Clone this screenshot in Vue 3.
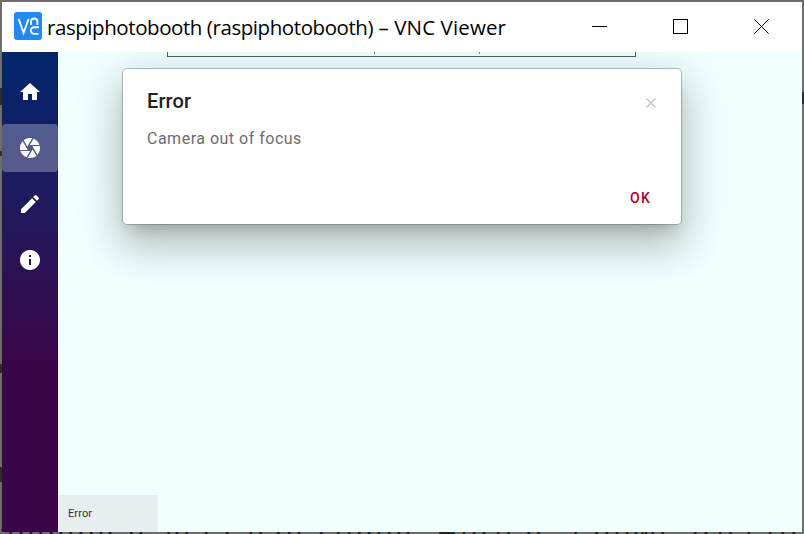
<script setup>
const items = [
  { name: 'home', d: 'M10 20v-6h4v6h5v-8h3L12 3 2 12h3v8z' },
  { name: 'camera', active: true, d: 'M9.4 10.5l4.77-8.26C13.47 2.09 12.75 2 12 2c-2.4 0-4.6.85-6.32 2.25l3.66 6.35.06-.1zM21.54 9c-.92-2.92-3.15-5.26-6-6.34L11.88 9h9.66zm.26 1h-7.49l.29.5 4.76 8.25C21 16.97 22 14.61 22 12c0-.69-.07-1.35-.2-2zM8.54 12l-3.9-6.75C3.01 7.03 2 9.39 2 12c0 .69.07 1.35.2 2h7.49l-1.15-2zm-6.08 3c.92 2.92 3.15 5.26 6 6.34L12.12 15H2.46zm11.27 0l-3.9 6.76c.7.15 1.42.24 2.17.24 2.4 0 4.6-.85 6.32-2.25l-3.66-6.35-.93 1.6z' },
  { name: 'edit', d: 'M3 17.25V21h3.75L17.81 9.94l-3.75-3.75L3 17.25zM20.71 7.04a1 1 0 0 0 0-1.41l-2.34-2.34a1 1 0 0 0-1.41 0l-1.83 1.83 3.75 3.75 1.83-1.83z' },
  { name: 'info', d: 'M12 2C6.48 2 2 6.48 2 12s4.48 10 10 10 10-4.48 10-10S17.52 2 12 2zm1 15h-2v-6h2v6zm0-8h-2V7h2v2z' },
]
</script>

<template>
  <div class="desktop">
    <div class="behind">ammng is via raspi-comig. Here is a newt area to</div>
    <span class="mark m1"></span><span class="mark m2"></span><span class="mark m3"></span>
    <span class="mark m4"></span><span class="mark m5"></span>
    <div class="window">
      <header class="titlebar">
        <svg class="logo" viewBox="0 0 28 28">
          <rect width="28" height="28" rx="3" fill="#2587f0" />
          <g fill="none" stroke="#f2f8ff" stroke-width="1.9">
            <path d="M4.600 6.800l5 14.200 5-14.200" />
            <path d="M17 13V9.500q0-3 3.200-3t3.200 3V13" />
            <path d="M25 15.300h-4.500q-3.600 0-3.600 3.300t3.600 3.300h4" />
          </g>
        </svg>
        <h1 class="title"><span class="host">raspiphotobooth (raspiphotobooth)</span> <span class="app">– VNC Viewer</span></h1>
        <svg class="controls" viewBox="0 0 210 50" fill="none" stroke="#000" stroke-width="1">
          <path d="M0 24.500h15M81.500 17.500h14v14h-14z" shape-rendering="crispEdges" />
          <path d="M162.300 17.300l14.400 14.400M176.700 17.300l-14.400 14.400" />
        </svg>
      </header>
      <div class="body">
        <nav class="side">
          <div v-for="i in items" :key="i.name" class="item" :class="{ active: i.active }">
            <svg viewBox="0 0 24 24"><path :d="i.d" fill="#fff" /></svg>
          </div>
        </nav>
        <main class="content">
          <div class="field"><i></i><i></i></div>
          <section class="dialog">
            <div class="head">
              <h2>Error</h2>
              <svg class="close" viewBox="0 0 12 12"><path d="M1.500 1.500l9 9M10.500 1.500l-9 9" stroke="#c4c4c4" stroke-width="1.300" /></svg>
            </div>
            <p>Camera out of focus</p>
            <div class="actions"><button>OK</button></div>
          </section>
          <footer class="status">Error</footer>
        </main>
      </div>
    </div>
  </div>
</template>

<style>
body { overflow: hidden; }
</style>

<style scoped>
* { box-sizing: border-box; }
.desktop { position: relative; width: 804px; height: 534px; padding: 2px; background: #6d6d6d; overflow: hidden; font-family: Roboto, sans-serif; }
.behind { position: absolute; left: -2px; top: 515px; font: 29px/36px "Open Sans", sans-serif; color: #202020; white-space: nowrap; letter-spacing: 3.100px; }
.mark { position: absolute; left: 0; width: 2px; background: #2d2d2d; }
.m1 { top: 88px; height: 17px; }
.m2 { top: 151px; height: 5px; }
.m3 { top: 364px; height: 9px; }
.m4 { top: 467px; height: 15px; }
.m5 { left: 802px; top: 92px; height: 12px; }
.window { position: relative; width: 800px; height: 530px; display: flex; flex-direction: column; background: #fff; }
.titlebar { height: 50px; display: flex; align-items: center; padding-left: 12px; flex: none; }
.logo { width: 28px; height: 28px; margin-bottom: 2px; flex: none; }
.title { margin: 0 0 0 5px; width: 545px; font: 400 20.500px/30px "Open Sans", sans-serif; color: #000; white-space: nowrap; }
.host { letter-spacing: -.430px; }
.app { letter-spacing: .120px; }
.controls { width: 210px; height: 50px; flex: none; }
.body { flex: 1; display: flex; min-height: 0; }
.side { width: 56px; padding-top: 16px; display: flex; flex-direction: column; gap: 8px; background: linear-gradient(#00266c 0, #1e1a5e 30%, #3b0649 66%, #3b0649 100%); }
.item { height: 48px; display: flex; align-items: center; justify-content: center; border-radius: 4px; }
.item.active { background: rgba(255, 255, 255, .27); }
.item svg { width: 24px; height: 24px; }
.content { flex: 1; display: flex; flex-direction: column; background: #f0ffff; overflow: hidden; }
.field { width: 469px; height: 5px; flex: none; margin-left: 109px; border: solid #526064; border-width: 0 1px 1px; display: flex; padding-left: 206px; gap: 104px; }
.field i { width: 1px; height: 2px; background: #7c8588; }
.dialog { width: 558px; height: 155px; margin: 12px 0 0 65px; flex: none; padding: 0 24px; background: #fff; border-radius: 4px; display: flex; flex-direction: column; box-shadow: 0 0 0 1px rgba(80, 95, 95, .38), 0 11px 15px -7px rgba(0, 0, 0, .2), 0 24px 38px 3px rgba(0, 0, 0, .14), 0 9px 46px 8px rgba(0, 0, 0, .12); }
.head { display: flex; justify-content: space-between; padding-top: 16px; height: 54px; }
h2 { margin: 0; font-size: 20px; line-height: 32px; font-weight: 500; letter-spacing: .1px; color: #212121; }
.close { width: 12px; height: 12px; margin-top: 12px; }
p { margin: 4px 0 0; font-size: 16px; line-height: 24px; letter-spacing: .5px; color: #6d6d6d; }
.actions { margin-top: auto; padding: 0 6px 8px 0; display: flex; justify-content: flex-end; }
button { border: 0; padding: 0; background: none; font: 500 14px/36px Roboto, sans-serif; letter-spacing: 1.250px; color: #b00020; }
.status { width: 100px; height: 37px; margin-top: auto; padding-left: 10px; background: #e8eef0; font-size: 11px; line-height: 37px; color: #333; letter-spacing: .1px; }
</style>
